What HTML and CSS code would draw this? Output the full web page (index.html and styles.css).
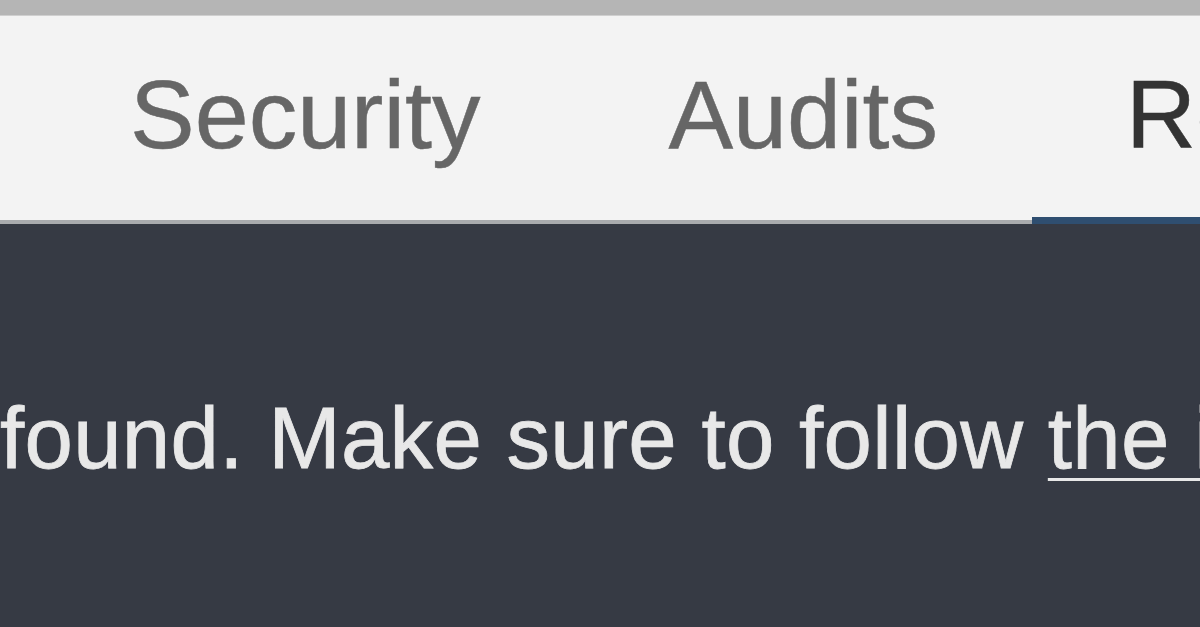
FILE: index.html
```html
<!DOCTYPE html>
<html>
<head>
<meta charset="utf-8">
<link rel="stylesheet" href="styles.css">
</head>
<body>
<div class="topbar"></div>
<div class="tabs">
  <div class="tab">Security</div>
  <div class="tab">Audits</div>
  <div class="tab active">Redux</div>
</div>
<div class="panel">
  <p class="msg">found. Make sure to follow <a class="link" href="#">the instructions</a>.</p>
</div>
</body>
</html>
```
FILE: styles.css
```css
html, body {
  margin: 0;
  padding: 0;
  width: 1200px;
  height: 627px;
  overflow: hidden;
  background: #363a44;
  font-family: "Liberation Sans", Arial, sans-serif;
}
.topbar {
  height: 16px;
  background: #b5b5b5;
  border-bottom: 1px solid #cfcfcf;
  box-sizing: border-box;
}
.tabs {
  height: 208px;
  background: #f3f3f3;
  display: flex;
  align-items: stretch;
  padding-left: 36px;
  box-sizing: border-box;
  border-bottom: 4px solid #a9abae;
  white-space: nowrap;
}
.tab {
  padding: 44px 94px 0 94px;
  margin-bottom: -4px;
  font-size: 97px;
  line-height: 110px;
  color: #666666;
  -webkit-text-stroke: 0.5px #666666;
  box-sizing: border-box;
}
.tab.active {
  color: #333333;
  -webkit-text-stroke: 0.5px #333333;
  border-bottom: 7px solid #2f4e70;
}
.panel {
  height: 403px;
  background: #363a44;
  overflow: hidden;
  padding-top: 169px;
  box-sizing: border-box;
}
.msg {
  margin: 0;
  white-space: nowrap;
  font-size: 87px;
  line-height: 90px;
  letter-spacing: 0.3px;
  color: #e8e8e8;
  -webkit-text-stroke: 0.8px #e8e8e8;
}
.link {
  color: #e8e8e8;
  text-decoration: underline;
  text-decoration-thickness: 3px;
  text-underline-offset: 10px;
}
```
